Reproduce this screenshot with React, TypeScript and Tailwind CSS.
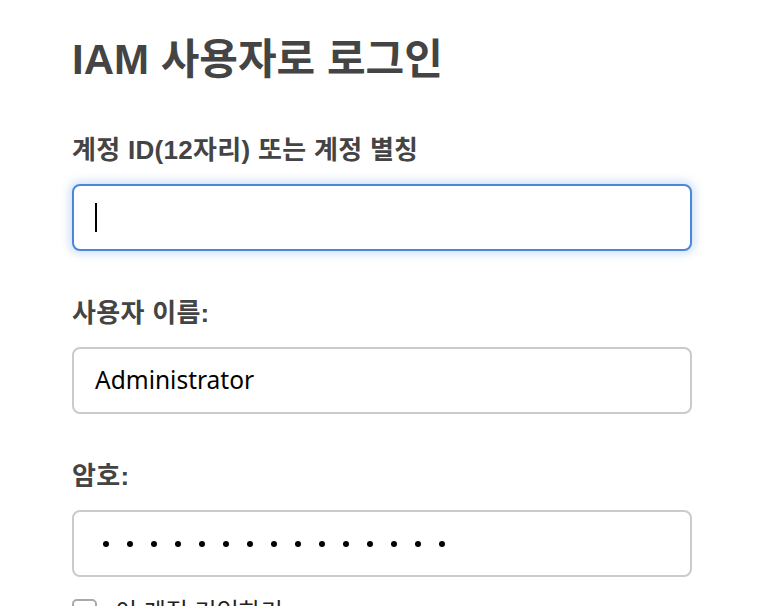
const font = { fontFamily: '"Liberation Sans", "Noto Sans CJK KR", sans-serif' };

function Field({ label, children, focused = false }: { label: string; children: React.ReactNode; focused?: boolean }) {
  return (
    <div className="flex flex-col">
      <label className="text-[26px] leading-[30px] font-bold text-[#444] tracking-[0.3px]">{label}</label>
      <div
        className={`mt-[19px] h-[67px] rounded-[8px] border-2 bg-white flex items-center px-[21px] ${
          focused ? 'border-[#4a87db] shadow-[0_0_8px_3px_rgba(74,135,219,0.25)]' : 'border-[#cbcbcb]'
        }`}
      >
        {children}
      </div>
    </div>
  );
}

export default function App() {
  return (
    <div className="min-h-screen bg-white pl-[72px] pt-[35px] overflow-hidden" style={font}>
      <div className="w-[620px] flex flex-col">
        <h1 className="text-[42px] leading-[50px] font-bold text-[#444]">IAM 사용자로 로그인</h1>

        <div className="mt-[50px] flex flex-col gap-[47px]">
          <Field label="계정 ID(12자리) 또는 계정 별칭" focused>
            <div className="w-[2px] h-[29px] bg-black" />
          </Field>

          <Field label="사용자 이름:">
            <span className="text-[24.5px] text-black" style={{ fontFamily: '"Noto Sans", sans-serif' }}>
              Administrator
            </span>
          </Field>

          <Field label="암호:">
            <div className="flex items-center gap-[18px] pl-[8px]">
              {Array.from({ length: 15 }).map((_, i) => (
                <span key={i} className="w-[6px] h-[6px] rounded-full bg-black" />
              ))}
            </div>
          </Field>
        </div>

        <div className="mt-[22px] flex items-start gap-[18px]">
          <span className="w-[25px] h-[25px] rounded-[5px] border-2 border-[#aaa] bg-white" />
          <span className="text-[24px] leading-[25px] text-[#222]">이 계정 기억하기</span>
        </div>
      </div>
    </div>
  );
}
